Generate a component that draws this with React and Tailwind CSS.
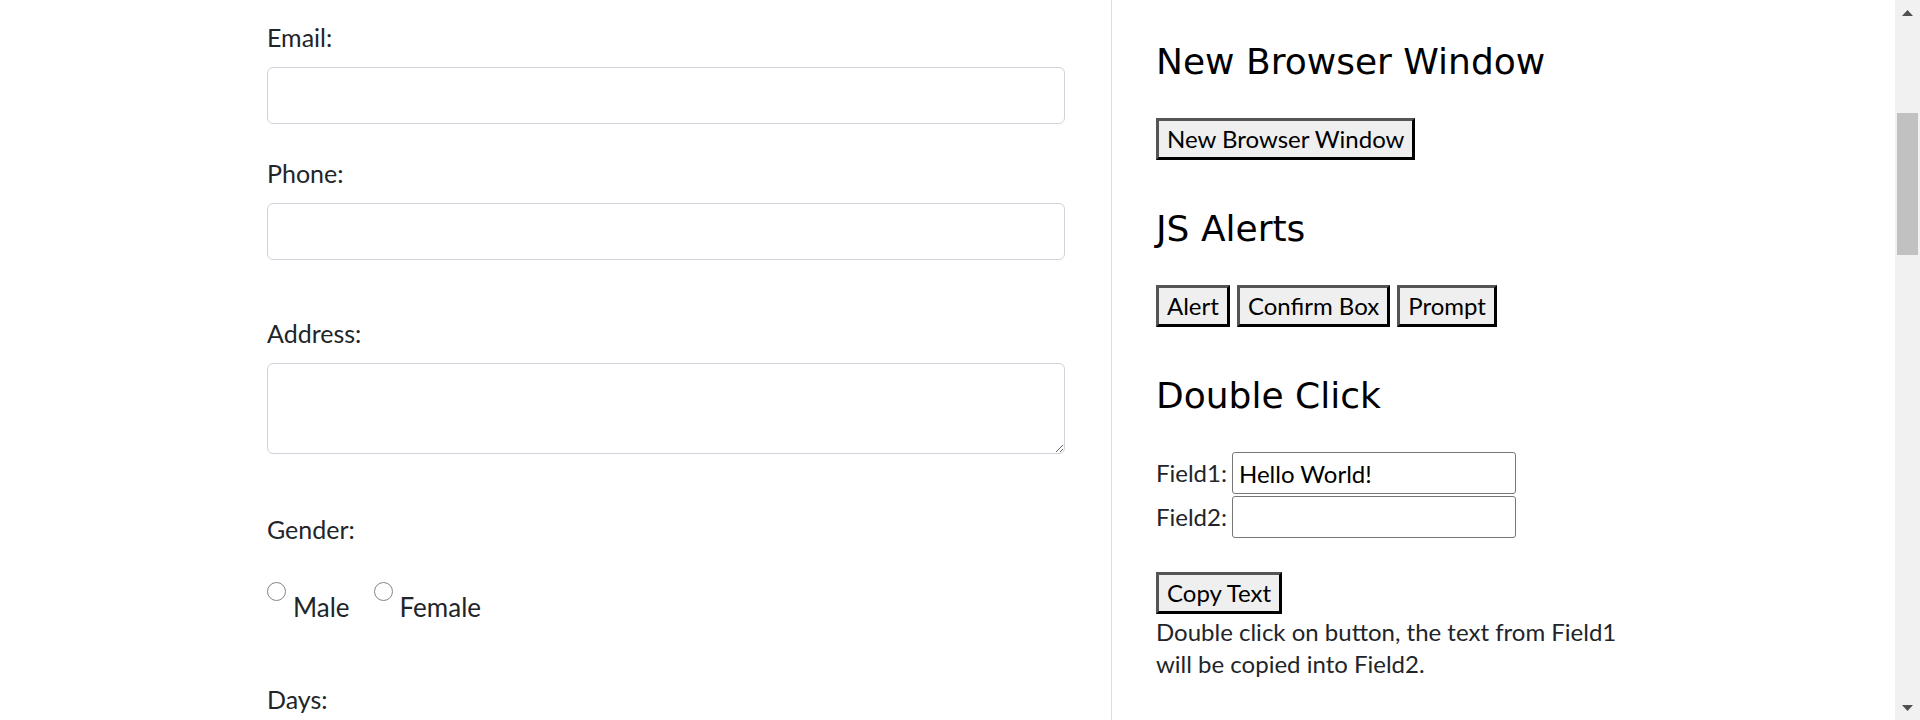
import React from 'react';

const body = { fontFamily: 'Lato, "Liberation Sans", sans-serif' };
const head = { fontFamily: '"DejaVu Sans", Verdana, sans-serif' };

const Btn = ({ children }) => (
  <button
    type="button"
    className="h-[42px] px-[8px] bg-[#efefef] border-[3px] border-solid border-t-[#555555] border-l-[#555555] border-r-black border-b-black text-[24px] leading-[36px] text-black"
  >
    {children}
  </button>
);

const Label = ({ children, className = '' }) => (
  <div className={`text-[25px] leading-[36px] text-[#212529] ${className}`}>{children}</div>
);

const FormInput = () => (
  <input
    type="text"
    className="block w-full h-[57px] bg-white border border-[#ced4da] rounded-[6px] px-[18px] text-[24px]"
  />
);

const Radio = ({ label }) => (
  <div className="flex items-start">
    <input
      type="radio"
      name="gender"
      className="appearance-none w-[19px] h-[19px] rounded-full border border-[#858585] bg-white"
    />
    <span className="mt-[7px] ml-[7px] text-[26px] leading-[36px] text-[#212529]">{label}</span>
  </div>
);

const Field = ({ label, value }) => (
  <div className="flex items-start h-[44px]">
    <span className="mt-[5px] text-[24px] leading-[32px] text-[#212529]">{label}</span>
    <input
      type="text"
      defaultValue={value}
      className="ml-[5px] w-[284px] h-[42px] bg-white border border-[#767676] rounded-[3px] px-[6px] text-[24px] text-black"
    />
  </div>
);

const Scrollbar = () => (
  <div className="w-[25px] h-full shrink-0 bg-[#f1f1f1] flex flex-col">
    <div className="h-[25px] flex items-center justify-center">
      <svg width="11" height="6" viewBox="0 0 11 6">
        <polygon points="5.5,0 11,6 0,6" fill="#505050" />
      </svg>
    </div>
    <div className="mt-[88px] mx-[2px] h-[142px] bg-[#c1c1c1]" />
    <div className="flex-1" />
    <div className="h-[25px] flex items-center justify-center">
      <svg width="11" height="6" viewBox="0 0 11 6">
        <polygon points="0,0 11,0 5.5,6" fill="#505050" />
      </svg>
    </div>
  </div>
);

const App = () => {
  return (
    <div className="flex w-[1920px] h-[720px] overflow-hidden bg-white" style={body}>
      <div className="flex flex-1">
        {/* left form column */}
        <div className="w-[1111px] shrink-0 pl-[267px] pr-[46px] pt-[19px]">
          <Label className="mb-[12px]">Email:</Label>
          <FormInput />
          <Label className="mt-[31px] mb-[12px]">Phone:</Label>
          <FormInput />
          <Label className="mt-[55px] mb-[12px]">Address:</Label>
          <textarea className="block w-full h-[91px] bg-white border border-[#ced4da] rounded-[6px] px-[18px] py-[9px] text-[24px]" />
          <Label className="mt-[57px]">Gender:</Label>
          <div className="mt-[35px] flex gap-[24px]">
            <Radio label="Male" />
            <Radio label="Female" />
          </div>
          <Label className="mt-[56px]">Days:</Label>
        </div>

        {/* right widgets column */}
        <div className="flex-1 border-l border-[#dedede] pl-[44px] pt-[41px]">
          <h2 className="text-[36px] leading-[42px] font-normal text-black mb-[35px]" style={head}>
            New Browser Window
          </h2>
          <Btn>New Browser Window</Btn>

          <h2 className="mt-[48px] text-[36px] leading-[42px] font-normal text-black mb-[35px]" style={head}>
            JS Alerts
          </h2>
          <div className="flex gap-[7px]">
            <Btn>Alert</Btn>
            <Btn>Confirm Box</Btn>
            <Btn>Prompt</Btn>
          </div>

          <h2 className="mt-[48px] text-[36px] leading-[42px] font-normal text-black mb-[35px]" style={head}>
            Double Click
          </h2>
          <Field label="Field1:" value="Hello World!" />
          <Field label="Field2:" value="" />
          <div className="mt-[32px]">
            <Btn>Copy Text</Btn>
          </div>
          <p className="mt-[2px] w-[480px] text-[24px] leading-[32px] text-[#212529]">
            Double click on button, the text from Field1 will be copied into Field2.
          </p>
        </div>
      </div>
      <Scrollbar />
    </div>
  );
};

export default App;
